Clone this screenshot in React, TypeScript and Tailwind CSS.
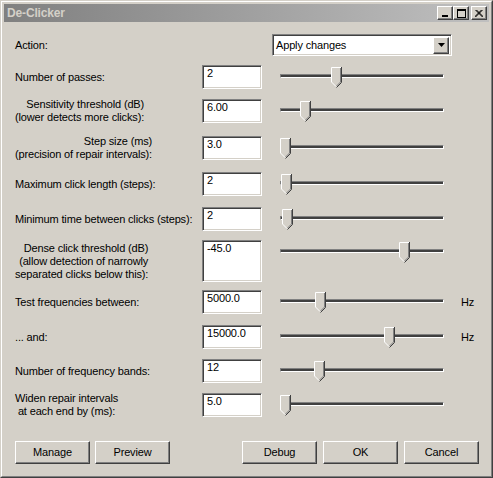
import React from 'react';

type Row = {
  label: string[];
  align?: 'right' | 'center';
  value: string;
  mt: string;
  thumb: string;
  tall?: boolean;
  hz?: boolean;
};

const rows: Row[] = [
  { label: ['Number of passes:'], value: '2', mt: 'mt-[9px]', thumb: 'left-[51px]' },
  {
    label: ['Sensitivity threshold (dB)', '(lower detects more clicks):'],
    align: 'right',
    value: '6.00',
    mt: 'mt-[10px]',
    thumb: 'left-[20px]',
  },
  {
    label: ['Step size (ms)', '(precision of repair intervals):'],
    align: 'right',
    value: '3.0',
    mt: 'mt-[13px]',
    thumb: 'left-0',
  },
  { label: ['Maximum click length (steps):'], value: '2', mt: 'mt-[12px]', thumb: 'left-[1px]' },
  { label: ['Minimum time between clicks (steps):'], value: '2', mt: 'mt-[11px]', thumb: 'left-[2px]' },
  {
    label: ['Dense click threshold (dB)', '(allow detection of narrowly', 'separated clicks below this):'],
    align: 'right',
    value: '-45.0',
    mt: 'mt-[9px]',
    thumb: 'left-[119px]',
    tall: true,
  },
  { label: ['Test frequencies between:'], value: '5000.0', mt: 'mt-[8px]', thumb: 'left-[35px]', hz: true },
  { label: ['... and:'], value: '15000.0', mt: 'mt-[11px]', thumb: 'left-[104px]', hz: true },
  { label: ['Number of frequency bands:'], value: '12', mt: 'mt-[10px]', thumb: 'left-[34px]' },
  {
    label: ['Widen repair intervals', 'at each end by (ms):'],
    align: 'center',
    value: '5.0',
    mt: 'mt-[10px]',
    thumb: 'left-0',
  },
];

// classic raised 3d edge
const raised =
  'bg-[#d4d0c8] border border-t-white border-l-white border-r-[#404040] border-b-[#404040] shadow-[inset_-1px_-1px_0_#808080]';
const sunken =
  'border border-t-[#808080] border-l-[#808080] border-r-white border-b-white shadow-[inset_1px_1px_0_#404040,inset_-1px_-1px_0_#d4d0c8]';

function Thumb() {
  return (
    <svg width="11" height="21" viewBox="0 0 11 21">
      <path d="M0.5 0.5H10.5V15.5L5.5 20.5L0.5 15.5Z" fill="#d4d0c8" />
      <path d="M5 19.5L0.5 15V0.5H10" fill="none" stroke="#ffffff" />
      <path d="M10.5 0V15.5L5.5 20.5" fill="none" stroke="#404040" />
      <path d="M9.5 1V15L5.5 19" fill="none" stroke="#808080" />
    </svg>
  );
}

function Slider({ thumb }: { thumb: string }) {
  return (
    <div className="relative w-[164px] h-[24px] shrink-0">
      <div className="absolute left-0 right-0 top-[9px] h-[4px] bg-[#404040] border border-t-[#808080] border-l-[#808080] border-r-white border-b-white" />
      <div className={`absolute top-[2px] ${thumb}`}>
        <Thumb />
      </div>
    </div>
  );
}

function Button({ label, className }: { label: string; className?: string }) {
  return (
    <div className={`w-[75px] h-[23px] flex items-center justify-center ${raised} ${className ?? ''}`}>
      {label}
    </div>
  );
}

function TitleButton({ children, className }: { children: React.ReactNode; className?: string }) {
  return (
    <div className={`w-[16px] h-[14px] flex items-center justify-center ${raised} ${className ?? ''}`}>
      {children}
    </div>
  );
}

export default function App() {
  return (
    <div className="w-[493px] h-[478px] bg-[#d4d0c8] text-black font-['Liberation_Sans',Arial,sans-serif] text-[11px] leading-[13px] tracking-[-0.15px] border border-t-[#d4d0c8] border-l-[#d4d0c8] border-r-[#404040] border-b-[#404040]">
      <div className="h-full border border-t-white border-l-white border-r-[#808080] border-b-[#808080] p-[2px] flex flex-col">
        {/* Title bar */}
        <div className="h-[18px] shrink-0 flex items-center bg-gradient-to-r from-[#808080] to-[#c0c0c0] pl-[3px] pr-[2px]">
          <span className="font-bold text-[#d4d0c8] text-[12px]">De-Clicker</span>
          <div className="ml-auto flex items-center">
            <TitleButton>
              <svg width="8" height="7" viewBox="0 0 8 7">
                <rect x="1" y="5" width="6" height="2" fill="#000" />
              </svg>
            </TitleButton>
            <TitleButton>
              <svg width="9" height="9" viewBox="0 0 9 9">
                <rect x="0.5" y="0.5" width="8" height="8" fill="none" stroke="#000" />
                <rect x="0" y="1" width="9" height="1" fill="#000" />
              </svg>
            </TitleButton>
            <TitleButton className="ml-[2px]">
              <svg width="8" height="7" viewBox="0 0 8 7">
                <path d="M0.5 0L7.5 7M1.5 0L8.5 7M7.5 0L0.5 7M6.5 0L-0.5 7" stroke="#000" strokeWidth="1" />
              </svg>
            </TitleButton>
          </div>
        </div>

        {/* Body */}
        <div className="flex flex-col pl-[11px] pr-[10px]">
          <div className="flex items-center mt-[12px] h-[22px]">
            <div className="w-[257px]">Action:</div>
            <div className={`w-[180px] h-[22px] bg-white flex items-center ${sunken} pl-[3px] pr-[2px]`}>
              <span>Apply changes</span>
              <div className={`ml-auto w-[16px] h-[17px] flex items-center justify-center ${raised}`}>
                <svg width="7" height="4" viewBox="0 0 7 4">
                  <path d="M0 0H7L3.5 4Z" fill="#000" />
                </svg>
              </div>
            </div>
          </div>

          {rows.map((r, i) => (
            <div key={i} className={`flex ${r.mt} ${r.tall ? 'h-[42px]' : 'h-[24px]'}`}>
              <div className="w-[187px] h-full flex items-center shrink-0">
                <div
                  className={
                    r.align === 'right' ? 'text-right' : r.align === 'center' ? 'text-center' : 'whitespace-nowrap'
                  }
                >
                  {r.label.map((l, j) => (
                    <div key={j} className="whitespace-nowrap">
                      {l}
                    </div>
                  ))}
                </div>
              </div>
              <div className={`w-[60px] h-full bg-white shrink-0 ${sunken} pl-[4px] pt-[1px]`}>{r.value}</div>
              <div className="w-[18px] shrink-0" />
              <Slider thumb={r.thumb} />
              <div className="w-[17px] shrink-0" />
              {r.hz && <div className="h-[24px] flex items-center">Hz</div>}
            </div>
          ))}

          <div className="flex mt-[24px]">
            <Button label="Manage" />
            <Button label="Preview" className="ml-[5px]" />
            <Button label="Debug" className="ml-auto" />
            <Button label="OK" className="ml-[6px]" />
            <Button label="Cancel" className="ml-[6px]" />
          </div>
        </div>
      </div>
    </div>
  );
}
